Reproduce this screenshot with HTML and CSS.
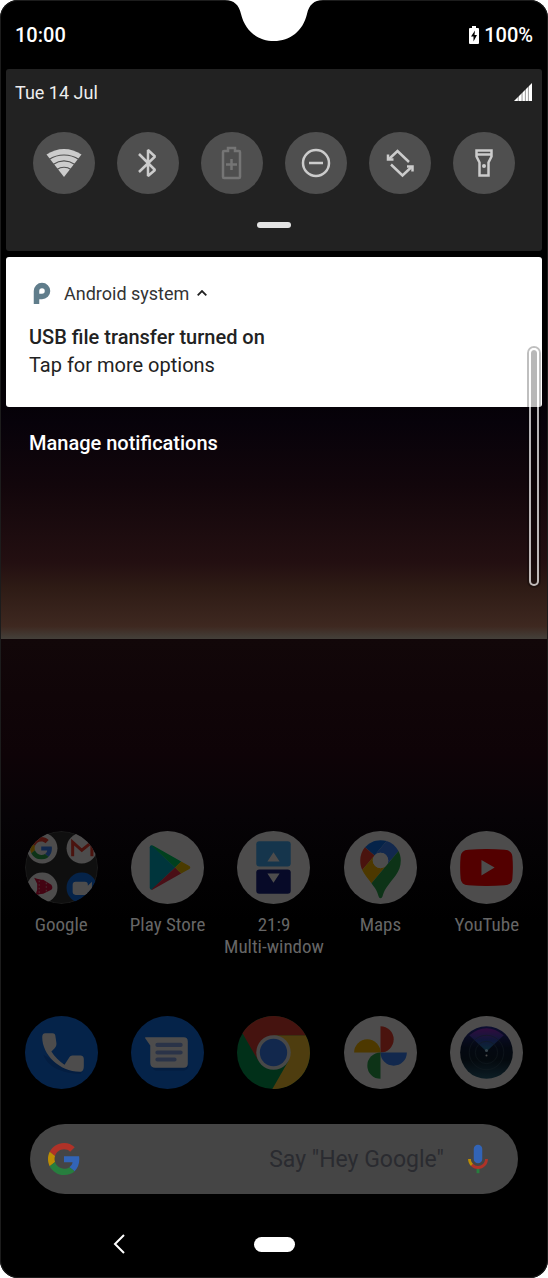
FILE: index.html
```html
<!DOCTYPE html>
<html lang="en">
<head>
  <meta charset="UTF-8">
  <meta name="viewport" content="width=device-width, initial-scale=1.0">
  <title>Notifications</title>
  <link rel="stylesheet" href="styles.css">
</head>
<body>
  <!-- Shared logo, used in the folder and the search bar -->
  <svg class="defs" aria-hidden="true">
    <symbol id="google-g" viewBox="0 0 48 48">
      <path fill="#ea4335" d="M24 9.5c3.54 0 6.71 1.22 9.21 3.6l6.85-6.85C35.9 2.38 30.47 0 24 0 14.62 0 6.51 5.38 2.56 13.22l7.98 6.19C12.43 13.72 17.74 9.5 24 9.5z"/>
      <path fill="#4285f4" d="M46.98 24.55c0-1.57-.15-3.09-.38-4.55H24v9.02h12.94c-.58 2.96-2.26 5.48-4.78 7.18l7.73 6c4.51-4.18 7.09-10.36 7.09-17.65z"/>
      <path fill="#fbbc05" d="M10.53 28.59c-.48-1.45-.76-2.99-.76-4.59s.27-3.14.76-4.59l-7.98-6.19C.92 16.46 0 20.12 0 24c0 3.88.92 7.54 2.56 10.78l7.97-6.19z"/>
      <path fill="#34a853" d="M24 48c6.48 0 11.93-2.13 15.89-5.81l-7.73-6c-2.15 1.45-4.92 2.3-8.16 2.3-6.26 0-11.57-4.22-13.47-9.91l-7.98 6.19C6.51 42.62 14.62 48 24 48z"/>
    </symbol>
  </svg>

  <div class="phone">
    <svg class="notch" viewBox="0 0 98 41" aria-hidden="true">
      <path fill="#fff" d="M0 0C9 0 14 5 16 14C20 31 33 41 49 41S78 31 82 14C84 5 89 0 98 0z"/>
    </svg>

    <header class="status-bar">
      <span>10:00</span>
      <span class="battery">
        <svg width="10" height="18" viewBox="0 0 10 18" aria-hidden="true">
          <path fill="#fff" d="M3 0h4v2h2q1 0 1 1v14q0 1-1 1H1q-1 0-1-1V3q0-1 1-1h2z"/>
          <path fill="#000" d="M6 4.500L2 10.500h2.500V15.500L8 9H5.500z"/>
        </svg>
        100%
      </span>
    </header>

    <section class="quick-settings">
      <div class="date-row">
        <span>Tue 14 Jul</span>
        <svg width="18" height="18" viewBox="0 0 19 19" aria-hidden="true">
          <path fill="#fff" d="M0 19L19 0v19z"/>
          <path stroke="#222" stroke-width=".5" d="M4.500 12v7M8.500 8v11M12 5v14M15.200 2v17"/>
        </svg>
      </div>
      <div class="tiles">
        <button class="tile" aria-label="Wi-Fi">
          <svg viewBox="0 0 62 62">
            <path fill="#ccc" d="M13.500 22.500C24 15 38 15 48.500 22.500L31 45z"/>
            <path fill="none" stroke="#4f4f4f" stroke-width="1.200" d="M16 27.500C25 21.500 37 21.500 46 27.500M20 32.500C27 28 35 28 42 32.500M24 37.500C28 34.500 34 34.500 38 37.500"/>
          </svg>
        </button>
        <button class="tile" aria-label="Bluetooth">
          <svg viewBox="0 0 62 62">
            <path class="line" stroke-linejoin="bevel" d="M22 22L38 38L31 44V18L38 24.500L22 40"/>
          </svg>
        </button>
        <button class="tile" aria-label="Battery Saver" disabled>
          <svg viewBox="0 0 62 62">
            <path class="line faint" d="M23 19h4v-3h7v3h4q1 0 1 1v25q0 1-1 1H23q-1 0-1-1V20q0-1 1-1zM30.500 27v11M25 32.500h11"/>
          </svg>
        </button>
        <button class="tile" aria-label="Do Not Disturb">
          <svg viewBox="0 0 62 62">
            <circle class="line" cx="31" cy="31" r="13"/>
            <path class="line" d="M24 31h14"/>
          </svg>
        </button>
        <button class="tile" aria-label="Auto-rotate">
          <svg viewBox="0 0 62 62">
            <path class="line" d="M20 27L28.500 19L40 30M22 32.500L33.500 43.500L42.500 35"/>
            <path class="line" d="M19 22.500V27.500H24.500M38 34.500H43.500V39.500"/>
          </svg>
        </button>
        <button class="tile" aria-label="Torch">
          <svg viewBox="0 0 62 62">
            <path class="line" d="M23.500 18.500h15v6l-3 6V43.500h-9V30.500l-3-6zM23.500 22.500h15"/>
            <circle fill="#ccc" cx="31" cy="34" r="2"/>
          </svg>
        </button>
      </div>
      <div class="handle"></div>
    </section>

    <article class="notification">
      <div class="notification-app">
        <svg width="18" height="22" viewBox="0 0 18 22" aria-hidden="true">
          <path fill="none" stroke="#607d8b" stroke-width="5.500" d="M3.500 22V9a5.500 5.500 0 1 1 5.500 5.500H4"/>
        </svg>
        <span>Android system</span>
        <svg width="10" height="6" viewBox="0 0 10 6" aria-hidden="true">
          <path fill="none" stroke="#222" stroke-width="1.800" d="M.7 5.300L5 1L9.300 5.300"/>
        </svg>
      </div>
      <h2>USB file transfer turned on</h2>
      <p>Tap for more options</p>
    </article>

    <button class="manage">Manage notifications</button>

    <div class="side-sense"></div>

    <main class="home">
      <nav class="apps">
        <a href="#">
          <svg class="app-icon" viewBox="0 0 72 72">
            <clipPath id="folder-clip"><circle cx="36" cy="36" r="36"/></clipPath>
            <g clip-path="url(#folder-clip)">
              <circle cx="36" cy="36" r="35.500" fill="#333" stroke="#555"/>
              <g fill="#fff">
                <circle cx="17" cy="17" r="15"/>
                <circle cx="56" cy="17" r="15"/>
                <circle cx="17" cy="56" r="15"/>
              </g>
              <use href="#google-g" x="5" y="6" width="22" height="22"/>
              <path fill="none" stroke="#ea4335" stroke-width="3" d="M47 25V11l9 8l10-8v14"/>
              <path fill="#d0103c" d="M9 46q6 2 9 2l8 5q2 3 0 5l-8 4q-4 0-8 2l2-6v-6z"/>
              <path stroke="#fff" stroke-width=".6" stroke-dasharray="1.500 2" d="M14 49v13M21 51v10"/>
              <circle cx="56" cy="56" r="15" fill="#1a73e8"/>
              <path fill="#fff" d="M50 50h9q3 0 3 3v1l4-4v13l-4-3q0 3-3 3h-9q-3 0-3-3v-7q0-3 3-3z"/>
            </g>
          </svg>
          <span>Google</span>
        </a>
        <a href="#">
          <svg class="app-icon" viewBox="0 0 72 72">
            <circle cx="36" cy="36" r="36" fill="#fff"/>
            <path fill="#00adc2" d="M18.500 16q0-2 2-2L43.500 36L20.500 58q-2 0-2-2z"/>
            <path fill="#00d068" d="M20 14q1 0 2 .5L49.500 30L43.500 36z"/>
            <path fill="#e8344a" d="M20 58q1 0 2-.5L49.500 42L43.500 36z"/>
            <path fill="#f5c400" d="M49.500 30L57.500 34.500q2 1.500 0 3L49.500 42L43.500 36z"/>
          </svg>
          <span>Play Store</span>
        </a>
        <a href="#">
          <svg class="app-icon" viewBox="0 0 72 72">
            <circle cx="36" cy="36" r="36" fill="#fff"/>
            <rect x="19" y="10" width="34" height="25" rx="3" fill="#4fb0f5"/>
            <rect x="19" y="38" width="34" height="24" rx="3" fill="#1a237e"/>
            <path fill="#fff" d="M36 21l6 9H30zM36 51l6-9H30z"/>
          </svg>
          <span>21:9<br>Multi-window</span>
        </a>
        <a href="#">
          <svg class="app-icon" viewBox="0 0 72 72">
            <circle cx="36" cy="36" r="36" fill="#fff"/>
            <g transform="translate(16 9) scale(.433)">
              <path fill="#1a73e8" d="M60.200 2.200C55.800.8 51 0 46.100 0 32 0 19.300 6.400 10.800 16.500l21.800 18.300L60.200 2.200z"/>
              <path fill="#ea4335" d="M10.800 16.500C4.100 24.500 0 34.900 0 46.100c0 8.700 1.700 15.700 4.600 22l28-33.300-21.800-18.300z"/>
              <path fill="#4285f4" d="M46.200 28.500c9.800 0 17.700 7.900 17.700 17.700 0 4.300-1.600 8.300-4.200 11.400 0 0 13.900-16.600 27.500-32.700-5.600-10.800-15.300-19-27-22.700L32.600 34.800c3.300-3.800 8.100-6.300 13.600-6.300"/>
              <path fill="#fbbc04" d="M46.200 63.800c-9.800 0-17.700-7.900-17.700-17.700 0-4.300 1.500-8.300 4.100-11.300l-28 33.300c4.800 10.600 12.800 19.200 21 29.900l34.100-40.500c-3.300 3.900-8.100 6.300-13.500 6.300"/>
              <path fill="#34a853" d="M59.100 109.200c15.400-24.100 33.300-35 33.300-63 0-7.700-1.900-14.900-5.200-21.300L25.600 98c2.600 3.400 5.300 7.300 7.900 11.300 9.400 14.500 6.800 23.100 12.800 23.100s3.400-8.700 12.800-23.200"/>
              <circle cx="46.200" cy="46.200" r="17.600" fill="#fff"/>
            </g>
          </svg>
          <span>Maps</span>
        </a>
        <a href="#">
          <svg class="app-icon" viewBox="0 0 72 72">
            <circle cx="36" cy="36" r="36" fill="#fff"/>
            <path fill="#f00" d="M18 18.500Q36 17 54 18.500Q61 19 61.500 25Q62.500 36 61.500 47Q61 53 54 53.500Q36 55 18 53.500Q11 53 10.500 47Q9.500 36 10.500 25Q11 19 18 18.500z"/>
            <path fill="#fff" d="M31 28.500L44 36L31 44z"/>
          </svg>
          <span>YouTube</span>
        </a>
      </nav>

      <nav class="dock">
        <a href="#" aria-label="Phone">
          <svg class="app-icon" viewBox="0 0 72 72">
            <circle cx="36" cy="36" r="36" fill="#1a73e8"/>
            <path fill="#1462cc" d="M18 38c4 12 18 19 37 19l3-5-30-8z"/>
            <path fill="#fff" d="M20 17h7c2 0 3 1 3 3l1 7c0 2 0 3-2 5l-3 3c3 5 8 10 13 13l4-6c1-2 2-3 4-3h7c3 0 4 1 4 4v6c0 4-1 6-4 6-20 0-37-17-37-34 0-3 1-4 3-4z"/>
          </svg>
        </a>
        <a href="#" aria-label="Messages">
          <svg class="app-icon" viewBox="0 0 72 72">
            <circle cx="36" cy="36" r="36" fill="#1a73e8"/>
            <path fill="#1462cc" d="M20 48q1 6 6 6h26q5-1 5-6z"/>
            <path fill="#fff" d="M15 21h37q4 0 4 4v22q0 4-4 4H24q-5 0-5-5V29l-5-7q-1-1 1-1z"/>
            <path fill="none" stroke="#8ea9e8" stroke-width="4" stroke-linecap="round" d="M26 28.500h23M26 36h23M26 43h17"/>
          </svg>
        </a>
        <a href="#" aria-label="Chrome">
          <svg class="app-icon" viewBox="0 0 72 72">
            <circle cx="36" cy="36" r="36" fill="#0f9d58"/>
            <path fill="#ffcd40" d="M36 19H67.700A36 36 0 0 1 34.900 72L50.700 44.500z"/>
            <path fill="#db4437" d="M36 19H67.700A36 36 0 0 0 5.400 17L21.300 44.500z"/>
            <circle cx="36" cy="36" r="17" fill="#f1f1f1"/>
            <circle cx="36" cy="36" r="13.500" fill="#4285f4"/>
          </svg>
        </a>
        <a href="#" aria-label="Photos">
          <svg class="app-icon" viewBox="0 0 72 72">
            <circle cx="36" cy="36" r="36" fill="#fff"/>
            <path fill="#ea4335" d="M36 10a13 13 0 0 1 0 26z"/>
            <path fill="#fbbc04" d="M10 36a13 13 0 0 1 26 0z"/>
            <path fill="#4285f4" d="M36 36a13 13 0 0 0 26 0z"/>
            <path fill="#34a853" d="M36 36a13 13 0 0 0 0 26z"/>
          </svg>
        </a>
        <a href="#" aria-label="Camera">
          <svg class="app-icon" viewBox="0 0 72 72">
            <defs>
              <linearGradient id="lens" x2="0" y2="1">
                <stop offset="0" stop-color="#2c2f9c"/>
                <stop offset=".4" stop-color="#101c38"/>
                <stop offset=".65" stop-color="#10202e"/>
                <stop offset="1" stop-color="#2c6078"/>
              </linearGradient>
              <linearGradient id="beam" x2="0" y2="1">
                <stop offset="0" stop-color="#9a2cc4"/>
                <stop offset=".5" stop-color="#3a4cb8"/>
                <stop offset="1" stop-color="#2a90b0"/>
              </linearGradient>
            </defs>
            <circle cx="36" cy="36" r="36" fill="#fff"/>
            <circle cx="36" cy="36" r="26" fill="url(#lens)"/>
            <path fill="url(#beam)" d="M36 35L19 19Q36 5 53 19z"/>
            <g fill="none" stroke="#3c5666" stroke-width=".6">
              <circle cx="36" cy="36" r="17"/>
              <circle cx="36" cy="36" r="11"/>
            </g>
            <circle cx="36" cy="34" r="1.500" fill="#bfe6ff"/>
            <circle cx="36" cy="39" r="1" fill="#fff"/>
          </svg>
        </a>
      </nav>

      <form class="search">
        <svg class="search-icon" width="32" height="32" aria-hidden="true"><use href="#google-g"/></svg>
        <input type="text" aria-label="Search" placeholder="Say &quot;Hey Google&quot;">
        <button type="button" aria-label="Voice search">
          <svg class="search-icon" width="34" height="34" viewBox="0 0 24 24">
            <path fill="#4285f4" d="M12 15c1.660 0 3-1.310 3-2.970V5.010C15 3.350 13.660 2 12 2S9 3.340 9 5.010v7.020C9 13.690 10.340 15 12 15z"/>
            <path fill="#34a853" d="M11 18.080h2V22h-2z"/>
            <path fill="#fbbc05" d="M7.050 16.870C5.780 15.540 5 14.040 5 12h2c0 1.450.56 2.420 1.470 3.380v.32l-1.150 1.180z"/>
            <path fill="#ea4335" d="M12 16.930a4.970 5.250 0 0 1-3.540-1.550l-1.410 1.490C8.310 18.210 10.070 19 12 19c3.870 0 6.990-2.920 6.990-7H17c0 2.920-2.240 4.930-5 4.930z"/>
          </svg>
        </button>
      </form>
    </main>

    <footer class="nav-bar">
      <button class="back" aria-label="Back">
        <svg width="12" height="20" viewBox="0 0 12 20">
          <path fill="none" stroke="#fff" stroke-width="2" d="M11 1L2 10L11 19"/>
        </svg>
      </button>
      <button class="home-pill" aria-label="Home"></button>
    </footer>
  </div>
</body>
</html>
```
FILE: styles.css
```css
* {
  box-sizing: border-box;
}

body {
  margin: 0;
  font-family: Roboto, "Liberation Sans", sans-serif;
  font-size: 20px;
  background-color: #fff;
  color: #fff;
}

button {
  padding: 0;
  border: none;
  background: none;
  font: inherit;
  color: inherit;
  cursor: pointer;
}

svg {
  display: block;
}

.defs {
  position: absolute;
  width: 0;
  height: 0;
}

.phone {
  position: relative;
  display: flex;
  flex-direction: column;
  min-height: 100vh;
  padding: 0 6px;
  border-radius: 18px;
  box-shadow: inset 0 0 0 1px #1c1c1c;
  background: linear-gradient(#000 28%, #07020a 33%, #12060b 38%, #230f11 44%, #2e1b15 46%, #3e2820 49%, #44403a 50%, #120709 50%, #0e0307 59%, #060306 64%, #000 72%);
}

.notch {
  position: absolute;
  top: 0;
  left: 50%;
  width: 98px;
  transform: translateX(-50%);
}

.status-bar {
  display: flex;
  justify-content: space-between;
  align-items: center;
  height: 69px;
  padding: 0 9px;
  font-weight: 500;
}

.battery {
  display: flex;
  align-items: center;
  gap: 5px;
}

/* Quick settings */
.quick-settings {
  padding: 11px 10px 23px 9px;
  border-radius: 3px;
  background-color: #222;
}

.date-row {
  display: flex;
  justify-content: space-between;
  align-items: center;
  height: 24px;
  margin-bottom: 28px;
  font-size: 18px;
  color: #eee;
}

.tiles {
  display: flex;
  justify-content: space-between;
  padding: 0 17px 0 18px;
}

.tile {
  width: 62px;
  height: 62px;
  border-radius: 50%;
  background-color: #4f4f4f;
}

.line {
  fill: none;
  stroke: #ccc;
  stroke-width: 2.5;
}

.faint {
  stroke: #757575;
}

.handle {
  width: 34px;
  height: 6px;
  margin: 28px auto 0;
  border-radius: 3px;
  background-color: #e4e4e4;
}

/* Notification card */
.notification {
  margin-top: 6px;
  padding: 23px 23px 28px;
  border-radius: 3px;
  background-color: #fff;
  color: #222;
}

.notification-app {
  display: flex;
  align-items: center;
  gap: 8px;
  height: 26px;
  margin-bottom: 17px;
  padding-left: 4px;
  font-size: 18px;
  color: #333;
}

.notification-app span {
  margin-left: 5px;
}

.notification h2,
.notification p {
  margin: 0;
  font-size: 20px;
  line-height: 28px;
}

.notification h2 {
  font-weight: 500;
}

.manage {
  align-self: flex-start;
  margin: 24px 23px 0;
  line-height: 24px;
  font-weight: 500;
}

.side-sense {
  position: absolute;
  top: 348px;
  right: 9px;
  width: 10px;
  height: 238px;
  border: 2px solid rgba(255, 255, 255, 0.7);
  border-radius: 5px;
  background-color: rgba(0, 0, 0, 0.28);
  background-clip: padding-box;
  box-shadow: 0 0 0 2px rgba(0, 0, 0, 0.25);
}

/* Home screen, dimmed behind the shade */
.home {
  margin-top: auto;
}

.apps,
.dock {
  display: grid;
  grid-template-columns: repeat(5, 1fr);
  padding: 0 2px;
}

.apps a,
.dock a {
  display: flex;
  flex-direction: column;
  align-items: center;
  gap: 10px;
  font-family: "Roboto Condensed", "Liberation Sans Narrow", Roboto, sans-serif;
  font-size: 19px;
  line-height: 22px;
  text-align: center;
  text-decoration: none;
  white-space: nowrap;
  color: #666;
}

.app-icon {
  width: 73px;
  height: 73px;
  filter: brightness(0.3) saturate(1.1);
}

.dock {
  margin-top: 58px;
}

.search {
  display: flex;
  align-items: center;
  height: 70px;
  margin: 35px 24px 16px;
  padding: 0 23px 0 18px;
  border-radius: 35px;
  background-color: #454545;
}

.search-icon {
  filter: brightness(0.75);
}

.search input {
  flex: 1;
  min-width: 0;
  margin: 0 17px;
  padding: 0;
  border: none;
  outline: none;
  background: none;
  font: inherit;
  font-size: 23px;
  text-align: right;
  color: #2a2b30;
}

.search input::placeholder {
  color: #2a2b30;
}

.nav-bar {
  display: grid;
  grid-template-columns: 1fr auto 1fr;
  align-items: center;
  height: 68px;
}

.back {
  margin: 0 auto;
  padding: 0 34px 0 12px;
}

.home-pill {
  width: 41px;
  height: 15px;
  border-radius: 8px;
  background-color: #fff;
}
```
